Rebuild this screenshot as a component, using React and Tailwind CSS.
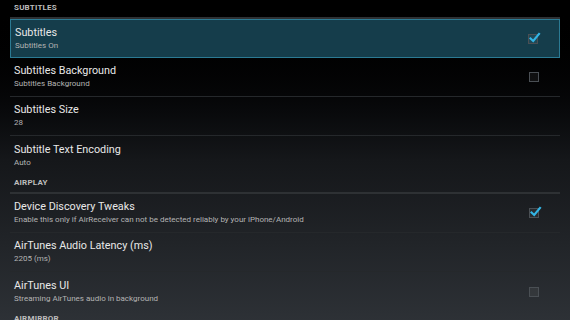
import React from 'react'

const CheckBox = ({ checked }) => {
  return (
    <div className="relative w-[10px] h-[10px] border border-[#4a4f54] bg-white/5 mr-[21px]">
      {checked && (
        <svg className="absolute left-[0px] -top-[3px]" width="12" height="11" viewBox="0 0 12 11">
          <path d="M1.5 6.5 L4.2 9 L10 2" fill="none" stroke="#33b5e5" strokeWidth="2.2" strokeLinecap="square" />
        </svg>
      )}
    </div>
  )
}

const Header = ({ label }) => (
  <div className="h-[19px] border-b-2 border-[#2e3134] flex items-center pl-[4px] pb-[1px]">
    <span className="text-[8px] font-bold text-[#bdbdbd] tracking-[0.2px]">{label}</span>
  </div>
)

const Item = ({ title, summary, checkbox, checked, active, last }) => {
  const base = 'h-[39px] flex items-center pl-[4px]'
  const cls = active
    ? base + ' bg-[#153d4b] border border-[#2b7a93] pl-[3px]'
    : last
    ? base
    : base + ' border-b border-[#25282b]'
  return (
    <div className={cls}>
      <div className="flex-1 flex flex-col pb-[1px]">
        <span className="text-[10.8px] leading-[14px] text-[#e8e8e8]">{title}</span>
        <span className="text-[8px] leading-[11px] text-[#b4b4b4]">{summary}</span>
      </div>
      {checkbox && <CheckBox checked={checked} />}
    </div>
  )
}

export default function App() {
  return (
    <div
      className="w-[570px] h-[320px] overflow-hidden bg-gradient-to-b from-[#000000] via-[#15171a] to-[#2d3136] px-[10px]"
      style={{ fontFamily: 'Roboto, "Liberation Sans", sans-serif' }}
    >
      <Header label="SUBTITLES" />
      <Item title="Subtitles" summary="Subtitles On" checkbox checked active />
      <Item title="Subtitles Background" summary="Subtitles Background" checkbox />
      <Item title="Subtitles Size" summary="28" />
      <Item title="Subtitle Text Encoding" summary="Auto" last />
      <Header label="AIRPLAY" />
      <Item
        title="Device Discovery Tweaks"
        summary="Enable this only if AirReceiver can not be detected reliably by your iPhone/Android"
        checkbox
        checked
      />
      <Item title="AirTunes Audio Latency (ms)" summary="2205 (ms)" />
      <Item title="AirTunes UI" summary="Streaming AirTunes audio in background" checkbox last />
      <Header label="AIRMIRROR" />
    </div>
  )
}
